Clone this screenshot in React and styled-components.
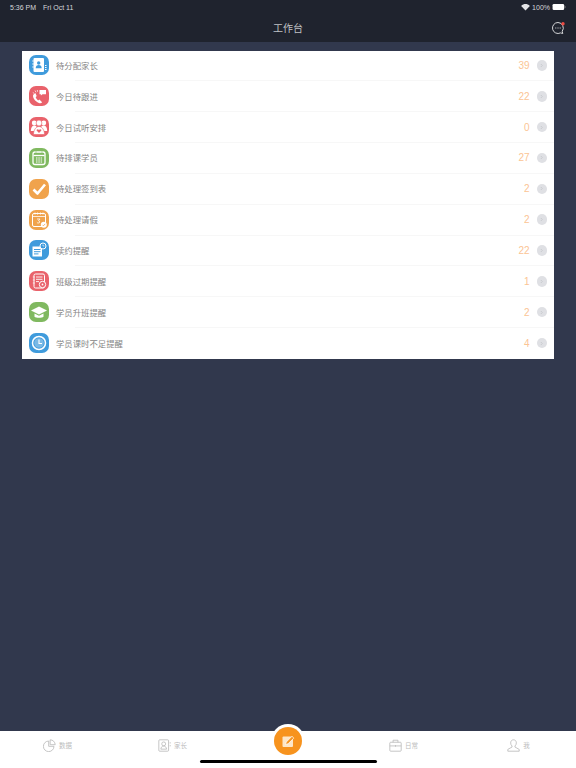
// App.jsx
import React from "react";
import styled, { createGlobalStyle } from "styled-components";

const GlobalStyle = createGlobalStyle`
  html, body {
    margin: 0;
    padding: 0;
    background: #31384d;
  }
  body {
    font-family: "Liberation Sans", "Noto Sans CJK SC", sans-serif;
  }
`;

const Page = styled.div`
  width: 576px;
  height: 768px;
  display: flex;
  flex-direction: column;
  overflow: hidden;
  background: #31384d;
`;

const Header = styled.header`
  height: 42px;
  flex: none;
  background: #1f232e;
  display: flex;
  flex-direction: column;
`;

const StatusBar = styled.div`
  height: 14px;
  padding: 0 10px;
  display: flex;
  align-items: center;
  justify-content: space-between;
  color: #d6d7da;
  font-size: 7px;
`;

const StatusGroup = styled.div`
  display: flex;
  align-items: center;
  gap: ${(p) => p.$gap || 2}px;
`;

const NavBar = styled.div`
  flex: 1;
  display: flex;
  align-items: center;
  justify-content: space-between;
  padding: 0 10px 0 0;
`;

const NavSide = styled.div`
  width: 16px;
  height: 16px;
`;

const NavTitle = styled.div`
  color: #c0c1c5;
  font-size: 10px;
  line-height: 14px;
  font-family: "Noto Sans CJK SC", sans-serif;
  padding: 0 0 0 10px;
  margin-bottom: 1px;
`;

const Content = styled.main`
  flex: 1;
  padding: 8.5px 22px 0;
`;

const Card = styled.section`
  background: #fff;
`;

const Row = styled.div`
  height: 30.85px;
  display: flex;
  align-items: center;
  padding: 0 7px;
  position: relative;
  &:not(:last-child)::after {
    content: "";
    position: absolute;
    left: 53px;
    right: 0;
    bottom: 0;
    height: 1px;
    background: #f7f7f7;
  }
`;

const IconBox = styled.div`
  width: 20px;
  height: 20px;
  margin-top: -1px;
  border-radius: 7px;
  background: ${(p) => p.$bg};
  flex: none;
  display: flex;
  align-items: center;
  justify-content: center;
`;

const Label = styled.div`
  margin: 0 0 2px 7px;
  flex: 1;
  color: #858585;
  font-size: 8.4px;
  line-height: 12px;
  font-family: "Noto Sans CJK SC", sans-serif;
`;

const Count = styled.div`
  color: #fbc494;
  font-size: 10px;
  margin-bottom: 1px;
`;

const Chevron = styled.div`
  width: 10.5px;
  height: 10.5px;
  border-radius: 50%;
  background: #dfe0e4;
  margin: 0 0 1px 7px;
  display: flex;
  align-items: center;
  justify-content: center;
`;

const TabBar = styled.nav`
  height: 37px;
  flex: none;
  background: #fff;
  position: relative;
  display: grid;
  grid-template-columns: 115px 115px 116px 115px 115px;
`;

const Tab = styled.div`
  display: flex;
  justify-content: center;
  align-items: center;
  gap: 3px;
  height: 13px;
  margin-top: 8px;
`;

const TabText = styled.span`
  color: #bcbcbc;
  font-size: 6.5px;
  line-height: 13px;
  font-family: "Noto Sans CJK SC", sans-serif;
`;

const FabRing = styled.div`
  position: absolute;
  left: 271px;
  top: -7px;
  width: 34px;
  height: 34px;
  border-radius: 50%;
  background: #fff;
  display: flex;
  align-items: center;
  justify-content: center;
`;

const Fab = styled.div`
  width: 28.5px;
  height: 28.5px;
  border-radius: 50%;
  background: #f7931e;
  display: flex;
  align-items: center;
  justify-content: center;
`;

const HomeBar = styled.div`
  position: absolute;
  left: 200px;
  bottom: 5px;
  width: 177px;
  height: 3px;
  border-radius: 2px;
  background: #000;
`;

const W = "#fff";

const glyphs = {
  contacts: (c) => (
    <>
      <rect x="4.5" y="3" width="10.5" height="14" rx="1" fill={W} />
      <circle cx="9.7" cy="8" r="1.7" fill={c} />
      <path d="M6.7 13.2c0-2.200 1.200-3.300 3-3.300s3 1.100 3 3.300z" fill={c} />
      <path d="M16 10.500h1.500M16 12.500h1.500M16 14.500h1.500" stroke={W} strokeWidth="1" />
      <path d="M3 6h2.500M3 9h2.500M3 12h2.500" stroke={W} strokeWidth=".7" />
    </>
  ),
  phone: () => (
    <>
      <path
        d="M4.500 8.500c-.8 1-.6 2.500.4 4.200 1.200 2 3 3.500 5 4.300 1.500.5 2.700.2 3.200-.8l-2.700-2.600-1.300.8c-1-.7-1.900-1.900-2.400-3.200l1-1.100L6.300 7z"
        fill={W}
      />
      <path d="M10.500 4h6.500v4.300h-3.500l-1.600 1.300V8.300h-1.400z" fill={W} />
      <path d="M3.800 6.500l1.500 1M6 4.500l1 1.800M8.300 4l.3 1.800" stroke={W} strokeWidth=".7" />
    </>
  ),
  group: (c) => (
    <>
      <circle cx="5.200" cy="6" r="2.400" fill={W} />
      <circle cx="14.800" cy="6" r="2.400" fill={W} />
      <circle cx="10" cy="6" r="2.900" fill={W} stroke={c} strokeWidth=".6" />
      <path d="M1.800 14c0-3.500 1.500-5.500 3.500-5.500S9 10.500 9 14z" fill={W} />
      <path d="M11 14c0-3.500 1.500-5.500 3.700-5.500s3.500 2 3.500 5.500z" fill={W} />
      <path d="M4.500 17.500c0-4.500 2.500-8 5.500-8s5.500 3.500 5.500 8z" fill={W} stroke={c} strokeWidth=".6" />
      <path d="M10 16l-2.200-2.200c-.8-1.100.9-2.200 2.200-.9 1.300-1.300 3-.2 2.200.9z" fill={c} />
    </>
  ),
  calendar: (c) => (
    <>
      <rect x="4" y="4" width="12" height="12.500" rx="2" fill="none" stroke={W} strokeWidth="1.300" />
      <path d="M4.500 7.500h11" stroke={W} strokeWidth="1.300" />
      <path
        d="M7 10h1.500M9.300 10h1.500M11.600 10h1.500M7 12h1.500M9.300 12h1.500M11.600 12h1.500M7 14h1.500M9.300 14h1.500M11.600 14h1.500"
        stroke={W}
        strokeWidth="1.200"
      />
      <path d="M7 3v2M13 3v2" stroke={c} strokeWidth=".5" />
    </>
  ),
  check: () => (
    <path d="M4.500 10.500l4 4L16 5.500" fill="none" stroke={W} strokeWidth="2.600" strokeLinejoin="round" />
  ),
  leave: (c) => (
    <>
      <rect x="3.500" y="3.500" width="13" height="13" rx="1.500" fill="none" stroke={W} strokeWidth="1" />
      <path d="M3.500 6.500h13M6 2.500v2M8.500 2.500v2M11.500 2.500v2M14 2.500v2" stroke={W} strokeWidth=".8" />
      <path d="M8 9h3l-1.500 1.700c1.500 0 1.800 2.300-.2 2.300-.7 0-1.200-.3-1.400-.7" fill="none" stroke={W} strokeWidth=".8" />
      <circle cx="14.800" cy="14.800" r="3" fill={W} />
      <path d="M13.400 14.800l1 1 1.800-1.900" fill="none" stroke={c} strokeWidth=".8" />
    </>
  ),
  renew: (c) => (
    <>
      <path d="M3.500 6.500h9.500v10H3.500z" fill={W} />
      <path d="M5 9.500h6.500M5 11.700h6.500M5 13.900h4.500" stroke={c} strokeWidth="1" />
      <circle cx="14" cy="6" r="3" fill={c} stroke={W} strokeWidth="1" />
      <path d="M14 4.500V6h1.300" fill="none" stroke={W} strokeWidth=".6" />
    </>
  ),
  classExpire: (c) => (
    <>
      <rect x="5" y="3" width="10.500" height="14" rx="1.500" fill="none" stroke={W} strokeWidth="1" />
      <path d="M7 6h6.500M7 8.300h6.500M7 10.600h3" stroke={W} strokeWidth=".9" />
      <path d="M3.800 6h2M3.800 9h2M3.800 12h2" stroke={W} strokeWidth=".7" />
      <circle cx="13.500" cy="13.500" r="3.200" fill={c} stroke={W} strokeWidth="1" />
      <circle cx="13.500" cy="13.500" r=".9" fill={W} />
    </>
  ),
  cap: () => (
    <>
      <path d="M10 4.500l8 4-8 4-8-4z" fill={W} />
      <path d="M5.500 11.500v3.200c1.500 1.300 7.500 1.300 9 0v-3.200L10 13.800z" fill={W} />
    </>
  ),
  clock: () => (
    <>
      <circle cx="10" cy="10" r="6.500" fill="none" stroke={W} strokeWidth="1.500" />
      <circle cx="10" cy="10" r="4.800" fill={W} opacity=".3" />
      <path d="M10 6.500V10.500h3" fill="none" stroke={W} strokeWidth="1.100" />
    </>
  ),
};

const items = [
  { label: "待分配家长", count: 39, bg: "#3f9bdc", glyph: "contacts" },
  { label: "今日待跟进", count: 22, bg: "#e9626b", glyph: "phone" },
  { label: "今日试听安排", count: 0, bg: "#e9626b", glyph: "group" },
  { label: "待排课学员", count: 27, bg: "#80b960", glyph: "calendar" },
  { label: "待处理签到表", count: 2, bg: "#f0a34c", glyph: "check" },
  { label: "待处理请假", count: 2, bg: "#f0a34c", glyph: "leave" },
  { label: "续约提醒", count: 22, bg: "#3f9bdc", glyph: "renew" },
  { label: "班级过期提醒", count: 1, bg: "#e9626b", glyph: "classExpire" },
  { label: "学员升班提醒", count: 2, bg: "#80b960", glyph: "cap" },
  { label: "学员课时不足提醒", count: 4, bg: "#3f9bdc", glyph: "clock" },
];

function TabIcon({ children }) {
  return (
    <svg width="13" height="13" viewBox="0 0 16 16" fill="none" stroke="#b9b9b9" strokeWidth="1">
      {children}
    </svg>
  );
}

export default function App() {
  return (
    <Page>
      <GlobalStyle />
      <Header>
        <StatusBar>
          <StatusGroup $gap={7}>
            <span>5:36 PM</span>
            <span>Fri Oct 11</span>
          </StatusGroup>
          <StatusGroup>
            <svg width="9" height="7" viewBox="0 0 10 8">
              <path d="M5 7.500L0 2.300C3-.7 7-.7 10 2.300z" fill="#e4e5e8" />
            </svg>
            <span>100%</span>
            <svg width="14" height="6" viewBox="0 0 15 7">
              <rect width="13.500" height="7" rx="1.500" fill="#fff" />
              <rect x="14" y="2.300" width="1" height="2.400" fill="#888" />
            </svg>
          </StatusGroup>
        </StatusBar>
        <NavBar>
          <NavSide />
          <NavTitle>工作台</NavTitle>
          <svg width="16" height="16" viewBox="0 0 16 16">
            <path
              d="M8 2.500a5.500 5.500 0 1 0 2.500 10.400l2.300.6-.6-2.200A5.500 5.500 0 0 0 8 2.500z"
              fill="none"
              stroke="#d5d6d8"
              strokeWidth="1"
            />
            <path d="M5.300 8h1M7.500 8h1M9.700 8h1" stroke="#d5d6d8" strokeWidth="1" />
            <circle cx="13" cy="3.800" r="1.700" fill="#ee4b43" />
          </svg>
        </NavBar>
      </Header>
      <Content>
        <Card>
          {items.map((item) => (
            <Row key={item.label}>
              <IconBox $bg={item.bg}>
                <svg width="20" height="20" viewBox="0 0 20 20">
                  {glyphs[item.glyph](item.bg)}
                </svg>
              </IconBox>
              <Label>{item.label}</Label>
              <Count>{item.count}</Count>
              <Chevron>
                <svg width="5" height="5" viewBox="0 0 5 5">
                  <path d="M1.800 1l1.500 1.500L1.800 4" fill="none" stroke="#c4c5ca" strokeWidth=".8" />
                </svg>
              </Chevron>
            </Row>
          ))}
        </Card>
      </Content>
      <TabBar>
        <Tab>
          <TabIcon>
            <path d="M7 2.500a6.500 6.500 0 1 0 6.500 6.500H7z" />
            <path d="M8.800 1v6h6.200a6.200 6.200 0 0 0-6.200-6z" />
          </TabIcon>
          <TabText>数据</TabText>
        </Tab>
        <Tab>
          <TabIcon>
            <rect x="1" y="1" width="12" height="14" rx="1" />
            <circle cx="7" cy="6" r="2.400" />
            <path d="M3.500 12.500c.3-2.500 1.500-3.800 3.500-3.800s3.200 1.300 3.500 3.800z" />
            <path d="M15 4v1.500M15 7.500V9" />
          </TabIcon>
          <TabText>家长</TabText>
        </Tab>
        <Tab />
        <Tab>
          <TabIcon>
            <rect x="1" y="4" width="14" height="11" rx="1" />
            <path d="M5 4V1.500h6V4M1 8.500h14M8 7.500v2" />
          </TabIcon>
          <TabText>日常</TabText>
        </Tab>
        <Tab>
          <TabIcon>
            <path d="M8 1c-2.200 0-3.500 1.600-3.500 3.800 0 1.600.7 3 1.700 3.800v1.300L1 12.800V15h14v-2.200l-5.200-2.900V8.600c1-.8 1.700-2.200 1.700-3.800C11.500 2.600 10.200 1 8 1z" />
          </TabIcon>
          <TabText>我</TabText>
        </Tab>
        <FabRing>
          <Fab>
            <svg width="16" height="16" viewBox="0 0 16 16">
              <rect x="2.500" y="3.500" width="10.500" height="10.500" rx="1" fill="#fde6c8" />
              <path d="M5.500 11.500l.8-2.500 5.700-5.700 1.800 1.800-5.700 5.700z" fill="#f7931e" stroke="#fff" strokeWidth=".7" />
            </svg>
          </Fab>
        </FabRing>
        <HomeBar />
      </TabBar>
    </Page>
  );
}
